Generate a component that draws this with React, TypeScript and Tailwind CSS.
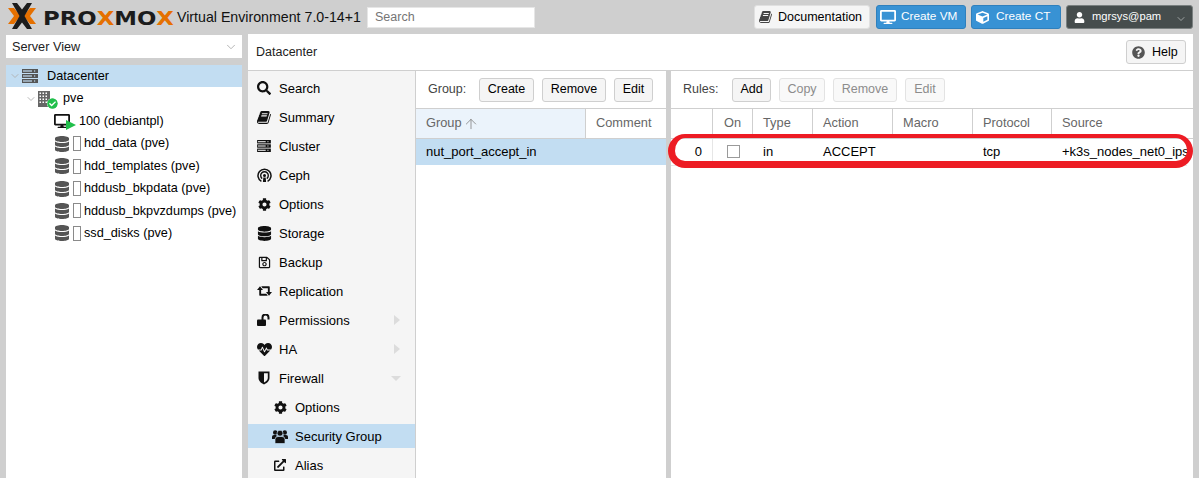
import React from "react";
import {
  FaSearch, FaCog, FaDatabase, FaRegSave, FaHeartbeat, FaExternalLinkAlt, FaQuestionCircle,
  FaDesktop, FaCube, FaUser, FaCheckCircle,
} from "react-icons/fa";
import { ChevronDown, ArrowUp } from "lucide-react";

function Logo() {
  return (
    <svg width="176" height="34" viewBox="0 0 176 34" className="shrink-0">
      <path d="M8 8h6l6.500 8-6.500 8H8l6-8z" fill="#e57000" />
      <path d="M36 8h-6l-6.500 8 6.500 8h6l-6-8z" fill="#e57000" />
      <path d="M12 3h5l5 6.500L27 3h5L24.500 16 32 29h-5l-5-6.500L17 29h-5l7.500-13z" fill="#1c1c1c" />
      <g transform="translate(43 25) scale(1.14 1)">
        <text x="0" y="0" fontFamily="'DejaVu Sans',sans-serif" fontWeight="700" fontSize="20" fill="#1c1c1c">
          PRO<tspan fill="#e57000">X</tspan>MO<tspan fill="#e57000">X</tspan>
        </text>
      </g>
    </svg>
  );
}

function Book({ size = 13, cls = "" }: { size?: number; cls?: string }) {
  return (
    <svg width={size} height={size} viewBox="0 0 1792 1792" fill="currentColor" className={cls}>
      <path d="M1639 478q40 57 18 129l-275 906q-19 64-76.500 107.500t-122.500 43.500h-923q-77 0-148.500-53.500t-99.500-131.500q-24-67-2-127 0-4 3-27t4-37q1-8-3-21.500t-3-19.500q2-11 8-21t16.500-23.500 16.500-23.500q23-38 45-91.500t30-91.500q3-10 .5-30t-.5-28q3-11 17-28t17-23q21-36 42-92t25-90q1-9-2.500-32t.5-28q4-13 22-30.500t22-22.500q19-26 42.500-84.500t27.500-96.500q1-8-3-25.500t-2-26.500q2-8 9-18t18-23 17-21q8-12 16.500-30.500t15-35 16-36 19.500-32 26.500-23.500 36-11.500 47.500 5.500l-1 3q38-9 51-9h761q74 0 114 56t18 130l-274 906q-36 119-71.500 153.500t-128.500 34.500h-869q-27 0-38 15-11 16-1 43 24 70 144 70h923q29 0 56-15.500t35-41.500l300-987q7-22 5-57 38 15 59 43zm-1064 2q-4 13 2 22.500t20 9.500h608q13 0 25.500-9.500t16.500-22.500l21-64q4-13-2-22.500t-20-9.500h-608q-13 0-25.500 9.500t-16.500 22.500zm-83 256q-4 13 2 22.500t20 9.500h608q13 0 25.500-9.500t16.500-22.500l21-64q4-13-2-22.500t-20-9.500h-608q-13 0-25.500 9.500t-16.500 22.500z" />
    </svg>
  );
}

function Server({ w, h, color, slot }: { w: number; h: number; color: string; slot: string }) {
  return (
    <svg width={w} height={h} viewBox="0 0 16 14">
      {[0, 5, 10].map((y) => (
        <g key={y}>
          <rect x="0" y={y} width="16" height="4" fill={color} />
          <rect x="1" y={y + 1.4} width="9" height="1.2" fill={slot} />
          <rect x="12" y={y + 1.4} width="1.2" height="1.2" fill={slot} />
        </g>
      ))}
    </svg>
  );
}

function Building() {
  const cells = [1.5, 4.5, 7.5];
  const rows = [1.5, 4.5, 7.5, 10.5];
  return (
    <svg width="12" height="16" viewBox="0 0 12 16" className="ml-[1px]">
      <rect width="12" height="16" fill="#666" />
      {rows.map((y) => cells.map((x) => <rect key={`${x}-${y}`} x={x} y={y} width="1.500" height="1.500" fill="#fff" />))}
    </svg>
  );
}

function Users() {
  return (
    <svg width="16" height="15" viewBox="0 0 16 15" fill="#111">
      <circle cx="3.200" cy="3.500" r="2.200" />
      <circle cx="12.800" cy="3.500" r="2.200" />
      <path d="M0 10V7.500Q0 6 2 6H4.500V10z" />
      <path d="M16 10V7.500Q16 6 14 6H11.500V10z" />
      <circle cx="8" cy="4.200" r="3" stroke="#c2ddf2" strokeWidth=".7" />
      <path d="M3 14.500V10.500Q3 7.500 6 7.500H10Q13 7.500 13 10.500V14.500z" stroke="#c2ddf2" strokeWidth=".7" />
    </svg>
  );
}

function Retweet() {
  return (
    <svg width="15" height="10" viewBox="0 0 16 10" fill="#111">
      <path d="M0 4L3.200 0 6.400 4H4.400V8H10L11.500 10H3Q2.400 10 2.400 9V4Z" />
      <path d="M16 6L12.800 10 9.600 6H11.600V2H6L4.500 0H13Q13.600 0 13.600 1V6Z" />
    </svg>
  );
}

function Unlock() {
  return (
    <svg width="14" height="12" viewBox="0 0 14 12">
      <rect x="0" y="5.500" width="9" height="6.500" rx="1" fill="#111" />
      <path d="M5.500 6V3.500a3 3 0 0 1 6 0V5.500" stroke="#111" strokeWidth="2" fill="none" />
    </svg>
  );
}

function Shield() {
  return (
    <svg width="12" height="14" viewBox="0 0 12 14">
      <path d="M.5.500H11.500V7C11.500 10.500 8 12.500 6 13.500 4 12.500.5 10.500.5 7Z" fill="#111" />
      <path d="M6 2.200H9.800V7C9.800 9.300 7.600 10.800 6 11.600Z" fill="#f5f5f5" />
    </svg>
  );
}

function TopBtn({ icon, label, cls, w }: { icon: React.ReactNode; label: string; cls: string; w: string }) {
  return (
    <div className={`h-[24px] rounded-[3px] border flex items-center shrink-0 ${cls} ${w}`}>
      {icon}
      <span>{label}</span>
    </div>
  );
}

function Btn({ label, w, disabled }: { label: string; w: string; disabled?: boolean }) {
  return (
    <div className={`h-[24px] rounded-[3px] border flex items-center justify-center ${w} ${disabled ? "border-[#e3e3e3] bg-[#f9f9f9] text-[#8c8c8c]" : "border-[#cfcfcf] bg-[#f5f5f5] text-black"}`}>
      {label}
    </div>
  );
}

function Arrow() {
  return <ChevronDown size={12} strokeWidth={1.800} className="text-[#b0b0b0] shrink-0" />;
}

function Storage({ label }: { label: string }) {
  return (
    <div className="h-[22.450px] flex items-center pl-[48px] text-black whitespace-nowrap">
      <FaDatabase size={16} className="text-[#555] shrink-0" />
      <span className="ml-[3px] w-[8px] h-[15px] border border-[#8a8a8a] bg-white shrink-0" />
      <span className="ml-[3px]">{label}</span>
    </div>
  );
}

function Ceph() {
  return (
    <svg width="15" height="15" viewBox="0 0 15 15" fill="none" stroke="#111">
      <path d="M4.400 13.400A6.500 6.500 0 1 1 10.600 13.400" strokeWidth="1.500" />
      <path d="M5.200 10.600A3.800 3.800 0 1 1 9.800 10.600" strokeWidth="1.400" />
      <circle cx="7.500" cy="7.400" r="1.500" fill="#111" stroke="none" />
      <path d="M6.300 9.500h2.400l.4 4.600H5.900z" fill="#111" stroke="none" />
    </svg>
  );
}

function NavItem({ icon, label, sub, selected, marker }: { icon: React.ReactNode; label: string; sub?: boolean; selected?: boolean; marker?: "right" | "down" }) {
  return (
    <div className={`h-[24px] flex items-center shrink-0 ${selected ? "bg-[#c2ddf2]" : ""}`}>
      <div className={`flex items-center justify-center w-[16px] shrink-0 ${sub ? "ml-[24px]" : "ml-[8px]"}`}>{icon}</div>
      <span className="ml-[7px] flex-1 text-black pt-[1px]">{label}</span>
      {marker === "right" && <span className="mr-[15px] w-0 h-0 border-y-[5px] border-y-transparent border-l-[6px] border-l-[#dcdcdc]" />}
      {marker === "down" && <span className="mr-[14px] w-0 h-0 border-x-[5px] border-x-transparent border-t-[5px] border-t-[#dcdcdc]" />}
    </div>
  );
}

function HeadCell({ children, cls = "" }: { children?: React.ReactNode; cls?: string }) {
  return <div className={`h-[29px] flex items-center pl-[10px] text-[#666] border-r border-[#cfcfcf] whitespace-nowrap ${cls}`}>{children}</div>;
}

function Cell({ children, cls = "" }: { children?: React.ReactNode; cls?: string }) {
  return <div className={`h-[26px] flex items-center pl-[10px] pb-[1px] text-black overflow-hidden whitespace-nowrap ${cls}`}>{children}</div>;
}

export default function App() {
  const ic = "text-[#111]";
  return (
    <div className="relative w-[1199px] h-[478px] overflow-hidden bg-[#cfcfcf] flex flex-col font-['Liberation_Sans',sans-serif] text-[12.5px] leading-none text-black">
      <header className="h-[34px] flex items-center shrink-0">
        <Logo />
        <span className="text-[14.2px] text-[#111] whitespace-nowrap ml-[1px] w-[190px] shrink-0">Virtual Environment 7.0-14+1</span>
        <div className="w-[168px] h-[21px] bg-white border border-[#e6e6e6] flex items-center pl-[7px] text-[#757575] shrink-0">Search</div>
        <div className="flex-1" />
        <TopBtn w="w-[116px]" cls="bg-[#f5f5f5] border-[#e0e0e0] text-black" icon={<Book size={14} cls="text-[#444] ml-[4px] mr-[5px]" />} label="Documentation" />
        <div className="w-[6px]" />
        <TopBtn w="w-[90px]" cls="bg-[#3892d4] border-[#2f80bd] text-white text-[11.800px]" icon={<FaDesktop size={16} className="ml-[3px] mr-[5px]" />} label="Create VM" />
        <div className="w-[5px]" />
        <TopBtn w="w-[90px]" cls="bg-[#3892d4] border-[#2f80bd] text-white text-[11.800px]" icon={<FaCube size={13} className="ml-[4px] mr-[7px]" />} label="Create CT" />
        <div className="w-[5px]" />
        <TopBtn w="w-[127px]" cls="bg-[#464d4d] border-[#7a8080] text-white text-[11.200px]" icon={<FaUser size={11} className="ml-[7px] mr-[7px]" />} label="mgrsys@pam" />
        <div className="w-[6px]" />
        <ChevronDown size={12} strokeWidth={1.500} className="absolute left-[1175px] top-[13px] text-[#b8bcbc]" />
      </header>

      <div className="flex-1 flex pl-[6px] pr-[6px] gap-[6px] min-h-0">
        <aside className="w-[236px] shrink-0 flex flex-col text-[12.700px]">
          <div className="h-[23px] mt-[1px] bg-white flex items-center pl-[6px] justify-between pr-[4px] text-[#222] shrink-0">
            <span className="pt-[1px]">Server View</span>
            <ChevronDown size={14} strokeWidth={1.600} className="text-[#b0b0b0]" />
          </div>
          <div className="flex-1 mt-[7px] bg-white">
            <div className="h-[22px] bg-[#c2ddf2] flex items-center pl-[3px] whitespace-nowrap">
              <Arrow />
              <span className="ml-[1px]"><Server w={16} h={14} color="#555" slot="#c2ddf2" /></span>
              <span className="ml-[9px]">Datacenter</span>
            </div>
            <div className="h-[23px] flex items-center pl-[19px]">
              <Arrow />
              <span className="relative w-[20px] h-[16px] flex items-center">
                <Building />
                <FaCheckCircle size={11} className="absolute left-[10px] top-[7px] text-[#21bf4b] bg-white rounded-full" />
              </span>
              <span className="ml-[6px]">pve</span>
            </div>
            <div className="h-[22.450px] flex items-center pl-[48px]">
              <span className="relative w-[18px] h-[16px] flex items-center">
                <FaDesktop size={16} className="text-[#111]" />
                <svg width="10" height="10" viewBox="0 0 10 10" className="absolute left-[12px] top-[7px]">
                  <path d="M0 0L10 5L0 10Z" fill="#21bf4b" />
                </svg>
              </span>
              <span className="ml-[7px]">100 (debiantpl)</span>
            </div>
            <Storage label="hdd_data (pve)" />
            <Storage label="hdd_templates (pve)" />
            <Storage label="hddusb_bkpdata (pve)" />
            <Storage label="hddusb_bkpvzdumps (pve)" />
            <Storage label="ssd_disks (pve)" />
          </div>
        </aside>

        <main className="flex-1 flex flex-col min-w-0 bg-white">
          <div className="h-[36px] shrink-0 flex items-center justify-between pl-[8px] pr-[7px] border-b border-[#cfcfcf] box-content">
            <span className="text-[#222]">Datacenter</span>
            <div className="h-[24px] w-[60px] border border-[#cfcfcf] bg-[#f5f5f5] rounded-[3px] flex items-center">
              <FaQuestionCircle size={13} className="text-[#555] ml-[5px] mr-[7px]" />
              <span>Help</span>
            </div>
          </div>

          <div className="flex-1 flex min-h-0">
            <nav className="w-[167px] shrink-0 bg-[#f5f5f5] border-r border-[#cfcfcf] box-content flex flex-col gap-[5px] pt-[5px] text-[13px]">
              <NavItem icon={<FaSearch size={14} className={ic} />} label="Search" />
              <NavItem icon={<Book size={15} cls={ic} />} label="Summary" />
              <NavItem icon={<Server w={14} h={12} color="#111" slot="#f5f5f5" />} label="Cluster" />
              <NavItem icon={<Ceph />} label="Ceph" />
              <NavItem icon={<FaCog size={13} className={ic} />} label="Options" />
              <NavItem icon={<FaDatabase size={15} className={ic} />} label="Storage" />
              <NavItem icon={<FaRegSave size={13} className={ic} />} label="Backup" />
              <NavItem icon={<Retweet />} label="Replication" />
              <NavItem icon={<Unlock />} label="Permissions" marker="right" />
              <NavItem icon={<FaHeartbeat size={15} className={ic} />} label="HA" marker="right" />
              <NavItem icon={<Shield />} label="Firewall" marker="down" />
              <NavItem sub icon={<FaCog size={13} className={ic} />} label="Options" />
              <NavItem sub selected icon={<Users />} label="Security Group" />
              <NavItem sub icon={<FaExternalLinkAlt size={12} className={ic} />} label="Alias" />
            </nav>

            <section className="w-[250px] shrink-0 flex flex-col">
              <div className="h-[37px] flex items-center pl-[12px] border-b border-[#cfcfcf] shrink-0 box-content">
                <span className="w-[51px] text-[#444]">Group:</span>
                <div className="flex gap-[8px]">
                  <Btn label="Create" w="w-[55px]" />
                  <Btn label="Remove" w="w-[64px]" />
                  <Btn label="Edit" w="w-[39px]" />
                </div>
              </div>
              <div className="grid grid-cols-[170px_80px] border-b border-[#cfcfcf] text-[12.800px]">
                <HeadCell cls="bg-[#ebf3fb]">
                  Group <ArrowUp size={16} strokeWidth={1.300} className="ml-[1px] text-[#888]" />
                </HeadCell>
                <HeadCell cls="border-r-0">Comment</HeadCell>
              </div>
              <div className="h-[26px] bg-[#c2ddf2] flex items-center pl-[10px] pb-[1px] text-[13px]">nut_port_accept_in</div>
            </section>

            <div className="w-[5px] bg-[#cfcfcf] shrink-0" />

            <section className="flex-1 flex flex-col min-w-0">
              <div className="h-[37px] flex items-center pl-[12px] border-b border-[#cfcfcf] shrink-0 box-content">
                <span className="w-[49px] text-[#444]">Rules:</span>
                <div className="flex gap-[8px]">
                  <Btn label="Add" w="w-[39px]" />
                  <Btn label="Copy" w="w-[46px]" disabled />
                  <Btn label="Remove" w="w-[64px]" disabled />
                  <Btn label="Edit" w="w-[40px]" disabled />
                </div>
              </div>
              <div className="grid grid-cols-[42px_40px_60px_80px_80px_79px_1fr] border-b border-[#cfcfcf] text-[12.800px]">
                <HeadCell />
                <HeadCell cls="pl-[11px]">On</HeadCell>
                <HeadCell>Type</HeadCell>
                <HeadCell>Action</HeadCell>
                <HeadCell>Macro</HeadCell>
                <HeadCell>Protocol</HeadCell>
                <HeadCell cls="border-r-0">Source</HeadCell>
              </div>
              <div className="grid grid-cols-[42px_40px_60px_80px_80px_79px_1fr] w-[516px] border-b border-[#e6e6e6] text-[13px]">
                <Cell cls="justify-end pr-[10px] border-r border-[#e6e6e6]">0</Cell>
                <Cell><span className="ml-[4px] w-[13px] h-[13px] border border-[#9a9a9a] bg-white" /></Cell>
                <Cell>in</Cell>
                <Cell>ACCEPT</Cell>
                <Cell />
                <Cell>tcp</Cell>
                <Cell>+k3s_nodes_net0_ips</Cell>
              </div>
            </section>
          </div>
        </main>
      </div>

      <div className="absolute left-[668px] top-[134px] w-[525px] h-[34px] rounded-[17px] border-t-[4px] border-b-[7px] border-l-[7px] border-r-[6px] border-[#ed1c24]" />
    </div>
  );
}
